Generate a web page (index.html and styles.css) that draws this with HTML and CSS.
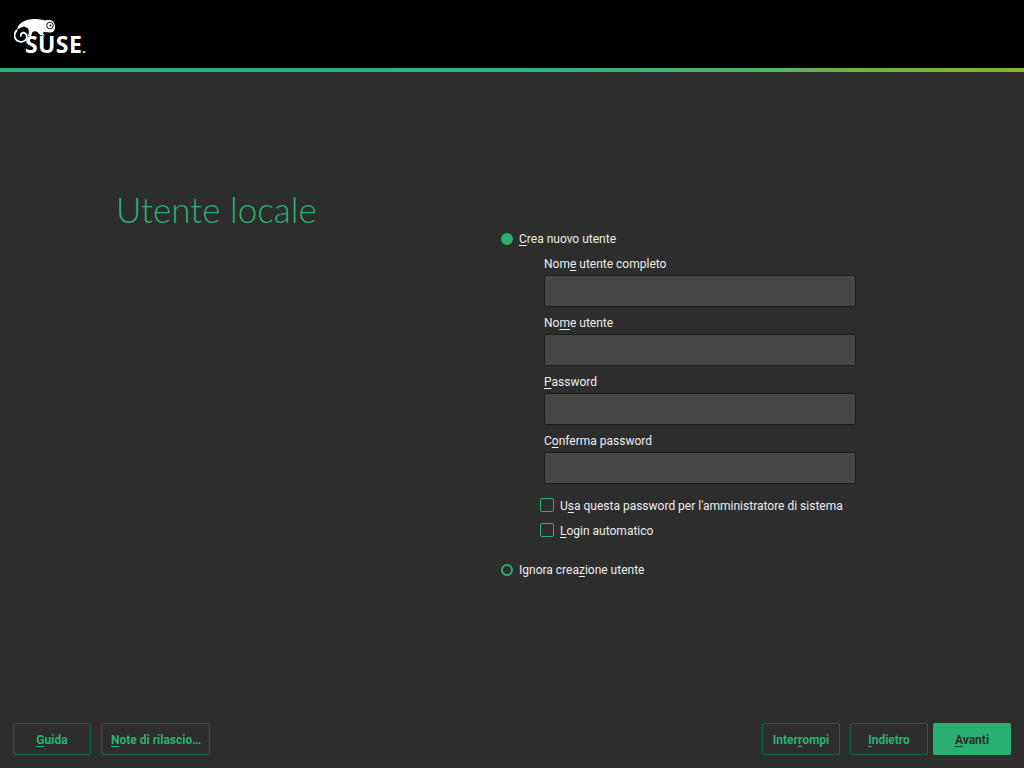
FILE: index.html
```html
<!DOCTYPE html>
<html lang="it">

<head>
    <meta charset="UTF-8">
    <meta name="viewport" content="width=device-width, initial-scale=1.0">
    <title>Utente locale</title>
    <link rel="stylesheet" href="styles.css">
</head>

<body>
<header class="top">
    <div class="logo">
        <svg class="gecko" width="44" height="24" viewBox="0 0 44 24">
            <path fill="#fff" d="M3 11C4 4 11 0 20 0c4 0 8 .5 11 1.500 3-1 7-.5 8.500 1.500 1.500 2 2 5 1 8-1 2-3 2.500-5 2.500l-5-.5c-1.500 0-2 1-1 2l1.500 1.500h-3c-2 0-3-2-4.500-3.500-1.500-1-3.500-1-5 0l-1.500 4h-3l1-4c0-3-2-5-5-5.500C9 8 5 9 3 11z"/>
            <path fill="none" stroke="#fff" stroke-width="1.800" d="M3 11c-2 2-3 5-2 8 1.500 3 5 4.500 8 3.500 3-1 4.500-4 3.500-6.500-1-2-3.500-3-5-1.500-1 1-1 2.500 0 3"/>
            <circle cx="36" cy="6.500" r="3.300" fill="none" stroke="#000" stroke-width="0.900"/>
            <circle cx="36.500" cy="6.500" r="1" fill="#000"/>
        </svg>
        <span class="brand">SUSE<small>.</small></span>
    </div>
</header>
<div class="stripe"></div>

<main class="content">
    <h1 class="title">Utente locale</h1>
    <form class="form">
        <label class="choice">
            <span class="radio on"></span>
            <span><u>C</u>rea nuovo utente</span>
        </label>
        <div class="fields">
            <label class="field">
                <span>Nom<u>e</u> utente completo</span>
                <input type="text">
            </label>
            <label class="field">
                <span>No<u>m</u>e utente</span>
                <input type="text">
            </label>
            <label class="field">
                <span><u>P</u>assword</span>
                <input type="password">
            </label>
            <label class="field">
                <span>C<u>o</u>nferma password</span>
                <input type="password">
            </label>
        </div>
        <div class="checks">
            <label class="check">
                <span class="box"></span>
                <span class="check-text">U<u>s</u>a questa password per l'amministratore di sistema</span>
            </label>
            <label class="check">
                <span class="box"></span>
                <span class="check-text"><u>L</u>ogin automatico</span>
            </label>
        </div>
        <label class="choice skip">
            <span class="radio"></span>
            <span>Ignora crea<u>z</u>ione utente</span>
        </label>
    </form>
</main>

<footer class="bottom">
    <div class="btns">
        <button type="button" class="btn wide"><u>G</u>uida</button>
        <button type="button" class="btn notes"><u>N</u>ote di rilascio…</button>
    </div>
    <div class="btns">
        <button type="button" class="btn wide">Inter<u>r</u>ompi</button>
        <button type="button" class="btn wide"><u>I</u>ndietro</button>
        <button type="button" class="btn wide primary"><u>A</u>vanti</button>
    </div>
</footer>
</body>

</html>
```

FILE: styles.css
```css
html, body {
    height: 100%;
}

body {
    box-sizing: border-box;
    margin: 0;
    display: flex;
    flex-direction: column;
    height: 768px;
    overflow: hidden;
    background: #2d2d2d;
    color: #eee;
    font-family: Roboto, sans-serif;
    font-size: 12px;
    line-height: 14px;
}

u {
    text-underline-offset: 2px;
}

.top {
    height: 68px;
    background: #000;
    padding: 19px 0 0 14px;
    box-sizing: border-box;
}

.logo {
    display: flex;
    flex-direction: column;
    width: 72px;
}

.gecko {
    display: block;
}

.brand {
    margin: -10px 0 0 11px;
    color: #fff;
    font-family: "Open Sans", sans-serif;
    font-size: 23px;
    font-weight: 700;
    line-height: 22px;
    letter-spacing: 0.4px;
    white-space: nowrap;
}

.brand small {
    font-size: 12px;
    letter-spacing: 0;
}

.stripe {
    height: 4px;
    background: linear-gradient(90deg, #2fae78 0%, #2bb08a 50%, #86b52f 100%);
}

.content {
    flex: 1;
    display: flex;
    min-height: 0;
}

.title {
    width: 385px;
    margin: 117px 0 0 116px;
    color: #2bb074;
    font-family: Lato, sans-serif;
    font-size: 35px;
    font-weight: 300;
    line-height: 40px;
}

.form {
    display: flex;
    flex-direction: column;
    width: 355px;
    margin-top: 160px;
}

.choice {
    display: flex;
    align-items: center;
    gap: 6px;
    height: 14px;
}

.radio {
    box-sizing: border-box;
    width: 12px;
    height: 12px;
    border: 2px solid #2bb074;
    border-radius: 50%;
}

.radio.on {
    background: #2bb074;
}

.fields {
    display: flex;
    flex-direction: column;
    gap: 9px;
    margin: 11px 0 0 43px;
}

.field {
    display: flex;
    flex-direction: column;
    gap: 4px;
}

.field input {
    box-sizing: border-box;
    width: 312px;
    height: 32px;
    margin: 0;
    padding: 0 6px;
    border: 1px solid #1d1d1d;
    border-radius: 2px;
    outline: 0;
    background: #464646;
    color: #eee;
}

.checks {
    display: flex;
    flex-direction: column;
    gap: 11px;
    margin: 14px 0 0 39px;
}

.check {
    display: flex;
    align-items: center;
    gap: 6px;
    height: 14px;
}

.check-text {
    padding-top: 2px;
}

.box {
    box-sizing: border-box;
    width: 14px;
    height: 14px;
    border: 1px solid #2bb074;
    border-radius: 2px;
}

.skip {
    margin-top: 26px;
}

.bottom {
    display: flex;
    justify-content: space-between;
    padding: 0 13px 13px;
}

.btns {
    display: flex;
    gap: 10px;
}

.btns .primary {
    margin-left: -5px;
}

.btn {
    box-sizing: border-box;
    height: 32px;
    padding: 2px 9px 0;
    border: 1px solid #18644a;
    border-radius: 2px;
    background: transparent;
    color: #2bb074;
    font-family: Roboto, sans-serif;
    font-size: 12px;
    font-weight: 700;
}

.wide {
    width: 78px;
}

.notes {
    padding-right: 8px;
}

.primary {
    border-color: #2bb074;
    background: #2bb074;
    color: #2d2d2d;
}
```
